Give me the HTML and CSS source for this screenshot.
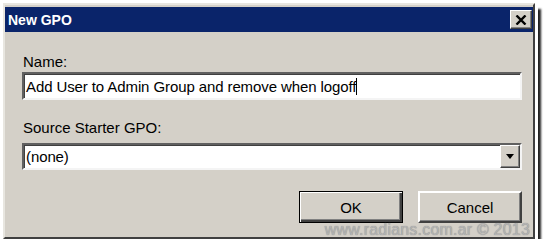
FILE: index.html
```html
<!DOCTYPE html>
<html lang="en">
<head>
    <meta charset="UTF-8">
    <meta name="viewport" content="width=device-width, initial-scale=1.0">
    <title>New GPO</title>
    <link rel="stylesheet" href="styles.css">
</head>
<body>
    <div class="window">
        <div class="titlebar">
            <span class="title">New GPO</span>
            <button class="close" type="button">
                <svg width="12" height="10" viewBox="0 0 12 10">
                    <path d="M1.5 0.5 L10.5 9.5 M10.5 0.5 L1.5 9.5" stroke="#000" stroke-width="2.4" fill="none"/>
                </svg>
            </button>
        </div>
        <div class="content">
            <div class="label">Name:</div>
            <div class="field">Add User to Admin Group and remove when logoff<span class="caret"></span></div>
            <div class="label label-source">Source Starter GPO:</div>
            <div class="field combo">
                <span class="combo-text">(none)</span>
                <span class="combo-btn"><span class="arrow"></span></span>
            </div>
            <div class="buttons">
                <button class="btn btn-default" type="button">OK</button>
                <button class="btn" type="button">Cancel</button>
            </div>
        </div>
        <div class="watermark">www.radians.com.ar © 2013</div>
    </div>
</body>
</html>
```

FILE: styles.css
```css
body {
    margin: 0;
    padding: 3px 0 0 3px;
    background-color: #fff;
    font-family: "Liberation Sans", Arial, sans-serif;
    font-size: 15px;
    color: #000;
}

.window {
    position: relative;
    box-sizing: border-box;
    width: 532px;
    height: 236px;
    background-color: #d4d0c8;
    border: 2px solid;
    border-color: #e8e6e0 #404040 #404040 #e8e6e0;
    padding-top: 2px;
    box-shadow: 3px 3px 0 0 #fff, 6px 6px 2px #222;
}

.titlebar {
    display: flex;
    align-items: center;
    justify-content: space-between;
    height: 25px;
    background-color: #0a246a;
    padding: 0 1px 0 3px;
}

.title {
    color: #fff;
    font-weight: bold;
    font-size: 14px;
}

.close {
    display: flex;
    align-items: center;
    justify-content: center;
    width: 22px;
    height: 19px;
    padding: 0;
    background-color: #d4d0c8;
    border: 1px solid;
    border-color: #fff #404040 #404040 #fff;
    box-shadow: inset -1px -1px 0 #808080;
}

.content {
    display: flex;
    flex-direction: column;
    padding: 21px 11px 0 17px;
}

.label {
    line-height: 18px;
    margin-bottom: 1px;
    padding-left: 1px;
}

.label-source {
    margin-top: 19px;
    margin-bottom: 6px;
}

.field {
    box-sizing: border-box;
    display: flex;
    align-items: center;
    height: 28px;
    background-color: #fff;
    border: 2px solid;
    border-color: #606060 #f4f4f4 #f4f4f4 #606060;
    box-shadow: inset 1px 1px 0 #404040;
    padding-left: 2px;
    white-space: nowrap;
    letter-spacing: -0.1px;
}

.caret {
    display: inline-block;
    width: 1px;
    height: 17px;
    background-color: #000;
}

.combo {
    height: 27px;
    justify-content: space-between;
    padding-right: 0;
}

.combo-btn {
    box-sizing: border-box;
    display: flex;
    align-items: center;
    justify-content: center;
    width: 20px;
    height: 23px;
    background-color: #d4d0c8;
    border: 1px solid;
    border-color: #fff #404040 #404040 #fff;
    box-shadow: inset -1px -1px 0 #808080;
}

.arrow {
    width: 0;
    height: 0;
    border-left: 4px solid transparent;
    border-right: 4px solid transparent;
    border-top: 5px solid #000;
}

.buttons {
    display: flex;
    justify-content: flex-end;
    gap: 15px;
    margin-top: 21px;
}

.btn {
    box-sizing: border-box;
    width: 104px;
    height: 32px;
    background-color: #d4d0c8;
    font-family: "Liberation Sans", Arial, sans-serif;
    font-size: 15px;
    color: #000;
    border: 2px solid;
    border-color: #fff #404040 #404040 #fff;
    box-shadow: inset -1px -1px 0 #808080;
    padding: 0;
}

.btn-default {
    border: 1px solid #000;
    box-shadow: inset 1px 1px 0 #fff, inset -2px -2px 0 #404040, inset -3px -3px 0 #808080;
}

.watermark {
    position: absolute;
    right: 3px;
    bottom: -2px;
    font-size: 16px;
    color: #b4b4b4;
    text-shadow: 0 0 1px #808080;
    letter-spacing: 0.2px;
}
```
